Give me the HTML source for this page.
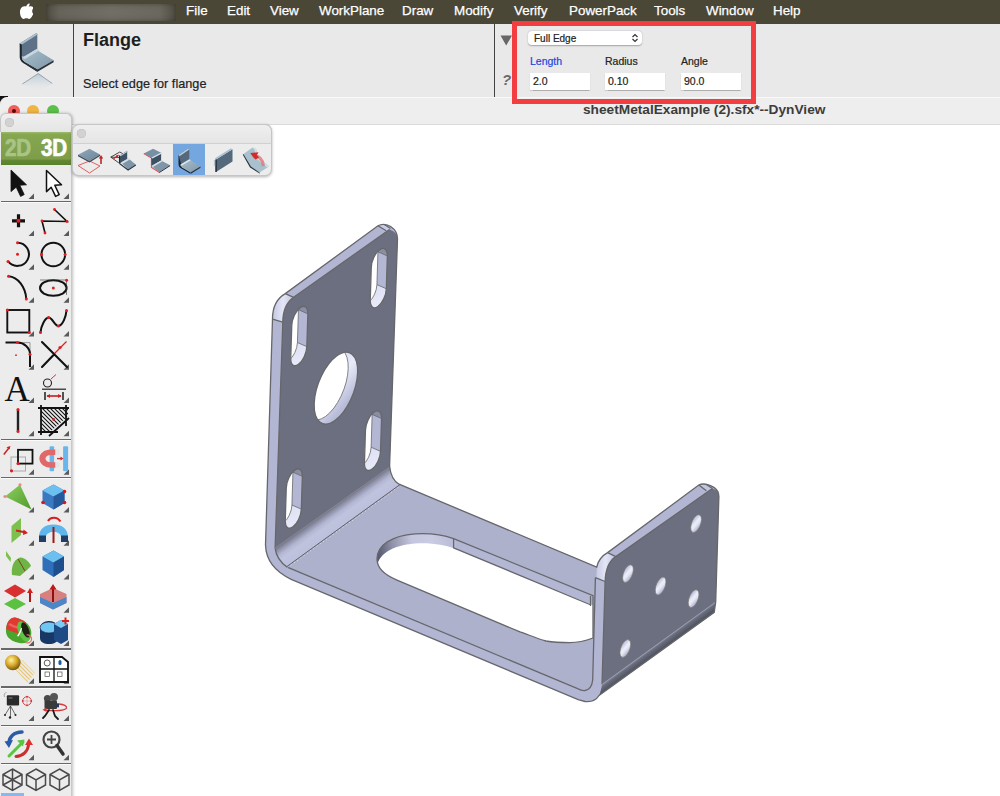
<!DOCTYPE html>
<html><head><meta charset="utf-8">
<style>
html,body{margin:0;padding:0;}
body{width:1000px;height:796px;overflow:hidden;position:relative;background:#fff;font-family:"Liberation Sans",sans-serif;}
.a{position:absolute;}
.menu{left:0;top:0;width:1000px;height:24px;background:#4a4736;}
.mi{position:absolute;top:3px;color:#fff;font-size:13.4px;line-height:16px;white-space:nowrap;-webkit-text-stroke:0.25px #fff;}
.hdr{left:0;top:24px;width:1000px;height:73px;background:#e9e9e9;}
.title{left:0;top:97px;width:1000px;height:27px;background:#ececec;border-bottom:1px solid #d8d8d8;}
.fld{position:absolute;background:#fff;height:17px;box-shadow:0 0.5px 1px rgba(0,0,0,0.25);font-size:10.5px;line-height:17px;color:#222;-webkit-text-stroke:0.2px #222;}
.lbl{position:absolute;font-size:10.5px;color:#222;-webkit-text-stroke:0.2px currentColor;}
</style></head><body>

<!-- menu bar -->
<div class="a menu">
  <svg class="a" style="left:19.5px;top:3.2px" width="13.8" height="16" viewBox="0 0 16 18" preserveAspectRatio="none"><path fill="#fff" d="M11.2 0.5c0.1 1.3-0.4 2.5-1.1 3.3-0.8 0.9-1.9 1.5-3 1.4-0.1-1.2 0.4-2.5 1.1-3.300.8-0.9 2-1.4 3-1.4zM14.9 13.2c-0.4 1-0.7 1.4-1.2 2.200-0.8 1.100-1.900 2.500-3.200 2.500-1.200 0-1.500-0.800-3.100-0.800-1.600 0-2 0.800-3.200 0.800-1.300 0-2.300-1.200-3.100-2.400C-0.300 12.300-0.500 8.300 1 6.100 2 4.500 3.600 3.600 5.100 3.600c1.500 0 2.500 0.800 3.800 0.800 1.200 0 2-0.800 3.700-0.800 1.300 0 2.700 0.700 3.700 2-3.300 1.800-2.700 6.400 0.600 7.600z"/></svg>
  <div class="a" style="left:45.5px;top:3.7px;width:130px;height:17.3px;background:linear-gradient(90deg,#4f4c42 0%,#66635a 10%,#716e65 50%,#6a675e 88%,#4f4c42 100%);box-shadow:inset 0 0 5px rgba(30,28,20,0.45);"></div>
  <span class="mi" style="left:186px">File</span>
  <span class="mi" style="left:227px">Edit</span>
  <span class="mi" style="left:270px">View</span>
  <span class="mi" style="left:319px">WorkPlane</span>
  <span class="mi" style="left:402px">Draw</span>
  <span class="mi" style="left:454px">Modify</span>
  <span class="mi" style="left:514px">Verify</span>
  <span class="mi" style="left:569px">PowerPack</span>
  <span class="mi" style="left:654px">Tools</span>
  <span class="mi" style="left:706px">Window</span>
  <span class="mi" style="left:773px">Help</span>
</div>

<!-- header panel -->
<div class="a hdr">
  <div class="a" style="left:73px;top:0;width:1.2px;height:73px;background:#444"></div>
  <div class="a" style="left:494px;top:0;width:1.2px;height:73px;background:#444"></div>
  <div class="a" style="left:83px;top:6px;font-size:18px;font-weight:bold;color:#1e1e1e">Flange</div>
  <div class="a" style="left:83px;top:52.5px;font-size:12.7px;color:#222;-webkit-text-stroke:0.2px #222">Select edge for flange</div>
  <svg class="a" style="left:500px;top:11px" width="13" height="11"><path d="M0.5 0.5H12L6.2 10.5Z" fill="#676767"/></svg>
  <div class="a" style="left:502px;top:47px;font-size:15px;font-weight:bold;font-style:italic;color:#6a6a6a">?</div>
  <!-- popup -->
  <div class="a" style="left:528px;top:6.5px;width:114px;height:14.5px;background:#fff;border-radius:4px;box-shadow:0 0.5px 1.5px rgba(0,0,0,0.3);"></div>
  <div class="a" style="left:534px;top:8px;font-size:10px;line-height:13px;color:#222;-webkit-text-stroke:0.2px #222">Full Edge</div>
  <svg class="a" style="left:631px;top:9px" width="8" height="10"><path d="M1.5 4L4 1.5L6.5 4M1.5 6L4 8.5L6.5 6" fill="none" stroke="#333" stroke-width="1.2"/></svg>
  <div class="lbl" style="left:530px;top:31px;color:#2245dd">Length</div>
  <div class="lbl" style="left:605px;top:31px">Radius</div>
  <div class="lbl" style="left:681px;top:31px">Angle</div>
  <div class="fld" style="left:530px;top:49px;width:60px"><span style="padding-left:3px">2.0</span></div>
  <div class="fld" style="left:605px;top:49px;width:60px"><span style="padding-left:3px">0.10</span></div>
  <div class="fld" style="left:681px;top:49px;width:60px"><span style="padding-left:3px">90.0</span></div>
</div>



<svg class="a" style="left:0;top:0" width="1000" height="796" viewBox="0 0 1000 796">
<defs>
<linearGradient id="bend1" gradientUnits="userSpaceOnUse" x1="332" y1="508" x2="344.5" y2="525.5">
<stop offset="0" stop-color="#74778b"/><stop offset="0.35" stop-color="#b3b6d1"/><stop offset="0.55" stop-color="#c0c3de"/><stop offset="1" stop-color="#bdc0dc"/></linearGradient>
<linearGradient id="bend2" gradientUnits="userSpaceOnUse" x1="658" y1="643.8" x2="664.5" y2="652.7">
<stop offset="0" stop-color="#8a8d9f"/><stop offset="0.15" stop-color="#6a6d7d"/><stop offset="0.6" stop-color="#50535f"/><stop offset="1" stop-color="#5c5f6c"/></linearGradient>
<linearGradient id="holeg" gradientUnits="objectBoundingBox" x1="0.35" y1="0" x2="0.65" y2="1">
<stop offset="0" stop-color="#b3b6d2"/><stop offset="0.42" stop-color="#eceefa"/><stop offset="0.62" stop-color="#e4e6f6"/><stop offset="1" stop-color="#a9acc9"/></linearGradient>
<linearGradient id="arcHi" gradientUnits="objectBoundingBox" x1="0" y1="0" x2="1" y2="0">
<stop offset="0" stop-color="#c4c7e2"/><stop offset="0.5" stop-color="#e4e6f7"/><stop offset="1" stop-color="#c0c3de"/></linearGradient>
<linearGradient id="wallBot" gradientUnits="objectBoundingBox" x1="0" y1="0" x2="0.3" y2="1">
<stop offset="0" stop-color="#d6d9f0"/><stop offset="0.5" stop-color="#e8eaf9"/><stop offset="1" stop-color="#b9bcd8"/></linearGradient>
<linearGradient id="wallTop" gradientUnits="objectBoundingBox" x1="0" y1="0" x2="0" y2="1">
<stop offset="0" stop-color="#6a6d7e"/><stop offset="1" stop-color="#9699b0"/></linearGradient>
<linearGradient id="slotarc" gradientUnits="userSpaceOnUse" x1="377" y1="552" x2="456" y2="540">
<stop offset="0" stop-color="#54576a"/><stop offset="0.2" stop-color="#8e91a8"/><stop offset="0.45" stop-color="#c3c6de"/><stop offset="0.7" stop-color="#c8cbe2"/><stop offset="1" stop-color="#b8bbd6"/></linearGradient>

<clipPath id="c_s0"><path transform="matrix(0.6699,-0.481,-0.031,1.0,0,0)" d="M 460.85 547.04 A 12.0 12.0 0 0 1 484.85 547.04 L 484.85 579.84 A 12.0 12.0 0 0 1 460.85 579.84 Z"/></clipPath>
<clipPath id="c_s1"><path transform="matrix(0.6699,-0.481,-0.031,1.0,0,0)" d="M 579.48 546.20 A 12.0 12.0 0 0 1 603.48 546.20 L 603.48 579.00 A 12.0 12.0 0 0 1 579.48 579.00 Z"/></clipPath>
<clipPath id="c_s2"><path transform="matrix(0.6699,-0.481,-0.031,1.0,0,0)" d="M 578.32 708.25 A 12.0 12.0 0 0 1 602.32 708.25 L 602.32 741.05 A 12.0 12.0 0 0 1 578.32 741.05 Z"/></clipPath>
<clipPath id="c_s3"><path transform="matrix(0.6699,-0.481,-0.031,1.0,0,0)" d="M 460.14 709.20 A 12.0 12.0 0 0 1 484.14 709.20 L 484.14 742.00 A 12.0 12.0 0 0 1 460.14 742.00 Z"/></clipPath>
<clipPath id="c_big"><path transform="matrix(0.6699,-0.481,-0.031,1.0,0,0)" d="M 498.80 643.71 A 32.4 32.4 0 0 1 563.60 643.71 A 32.4 32.4 0 0 1 498.80 643.71 Z"/></clipPath>
<clipPath id="c_slot"><path d="M 377 559 C 377 545 392 535.5 415 533.8 C 432 532.8 445 535.5 453.6 538.6 L 593 595.6 L 593 638 C 585 641 575 642.6 569.8 642.6 C 560 642.6 552 642 546 641 C 535 638 527 634 520 631.9 L 396.4 579.8 C 385 575 377 568 377 559 Z"/></clipPath>
</defs>
<path d="M 272.5 319 C 272.5 307 277.5 298 285.3 293.6 L 378 225.8 C 381.5 223.8 386.5 224 391 226.8 C 395 229.5 397.5 233.5 397.5 239 L 389.6 466 C 390.5 475 393.5 481 399 484.2 L 596.7 567 C 598 561 601.5 556 607.6 552.6 L 698.8 485.1 C 702 483.4 708 484 713.9 487.4 C 717.5 489.8 718.9 492.5 718.9 496.4 L 715.7 602 L 714.2 612.4 L 599 695.5 C 596 700.5 590 702 585 701.5 L 578.2 699.6 L 291.2 579.3 C 278 573 266 562 265.5 545 Z" fill="#b3b6d2"/>
<path d="M 285.3 293.6 C 277.5 298 272.5 307 272.5 319.2 L 282.8 322.2 C 282.8 311 287 302 293.6 297.3 Z" fill="url(#arcHi)"/>
<path d="M 607.6 552.6 C 601.5 556 596 565 595.4 577.7 L 605.1 581.5 C 605.5 570 609 561 615.8 556.6 Z" fill="url(#arcHi)"/>
<path d="M 377.9 225.9 C 382 223.5 387 223.5 391 226 L 389.5 229.5 L 386.2 230.8 Z" fill="#c9cce6"/>
<path d="M 698.8 485.1 C 702 483.4 708 484 712.7 488.8 L 706.4 490.7 Z" fill="#c2c5e0"/>
<path d="M 286.7 566.7 L 400.2 484.4 L 596.7 567 L 592.7 680 C 592 686 589 690 585 690.5 C 582 690.8 580 690 578.2 688.9 Z" fill="#adb1cc"/>
<path d="M 275.1 548.1 L 389.6 467 C 390.5 475 393.5 481 400.2 484.4 L 286.7 566.7 C 280 562 276 556 275.1 548.1 Z" fill="url(#bend1)"/>
<path d="M 282.8 322.2 C 282.8 311 287 302 293.6 297.3 L 389.5 229.5 C 394 231 397.5 234 397.5 239 L 389.6 467 L 275.1 548.1 Z" fill="#6c6f80"/>
<path d="M 605.1 581.5 C 605.5 570 609 561 615.8 556.6 L 712 488.8 C 716 489.5 718.9 492 718.9 496.4 L 715.7 602 L 602 684.4 Z" fill="#6c6f80"/>
<path d="M 602 684.4 L 715.7 602 L 714.2 612.4 L 599 695.5 C 600.5 692 601.5 688 602 684.4 Z" fill="url(#bend2)"/>
<path d="M 377 559 C 377 545 392 535.5 415 533.8 C 432 532.8 445 535.5 453.6 538.6 L 593 595.6 L 593 638 C 585 641 575 642.6 569.8 642.6 C 560 642.6 552 642 546 641 C 535 638 527 634 520 631.9 L 396.4 579.8 C 385 575 377 568 377 559 Z" fill="#b4b7d3"/>
<g clip-path="url(#c_slot)"><path d="M 370 530 L 456 530 L 456 556 L 370 580 Z" fill="url(#slotarc)"/><path transform="translate(0,9.6)" d="M 377 559 C 377 545 392 535.5 415 533.8 C 432 532.8 445 535.5 453.6 538.6 L 593 595.6 L 593 638 C 585 641 575 642.6 569.8 642.6 C 560 642.6 552 642 546 641 C 535 638 527 634 520 631.9 L 396.4 579.8 C 385 575 377 568 377 559 Z" fill="#fff"/></g>
<path transform="matrix(0.6699,-0.481,-0.031,1.0,0,0)" d="M 460.85 547.04 A 12.0 12.0 0 0 1 484.85 547.04 L 484.85 579.84 A 12.0 12.0 0 0 1 460.85 579.84 Z" fill="#b4b7d3"/>
<g clip-path="url(#c_s0)"><path d="M 279.33 334.63 L 334.32 358.62 L 334.32 398.62 L 279.33 374.63 Z" fill="url(#wallBot)"/><path d="M 280.34 301.83 L 335.34 325.82 L 335.34 285.82 L 280.34 261.83 Z" fill="url(#wallTop)"/><path transform="translate(-9.4,-4.1) matrix(0.6699,-0.481,-0.031,1.0,0,0)" d="M 460.85 547.04 A 12.0 12.0 0 0 1 484.85 547.04 L 484.85 579.84 A 12.0 12.0 0 0 1 460.85 579.84 Z" fill="#fff"/><path d="M 306.83 346.63 L 297.43 342.53 M 307.84 313.83 L 298.44 309.73" stroke="#66676b" stroke-width="0.8"/><path transform="translate(-9.4,-4.1) matrix(0.6699,-0.481,-0.031,1.0,0,0)" d="M 460.85 547.04 A 12.0 12.0 0 0 1 484.85 547.04 L 484.85 579.84 A 12.0 12.0 0 0 1 460.85 579.84 Z" fill="none" stroke="#66676b" stroke-width="0.8" vector-effect="non-scaling-stroke"/></g>
<path transform="matrix(0.6699,-0.481,-0.031,1.0,0,0)" d="M 460.85 547.04 A 12.0 12.0 0 0 1 484.85 547.04 L 484.85 579.84 A 12.0 12.0 0 0 1 460.85 579.84 Z" fill="none" stroke="#66676b" stroke-width="1.3" vector-effect="non-scaling-stroke"/>
<path transform="matrix(0.6699,-0.481,-0.031,1.0,0,0)" d="M 579.48 546.20 A 12.0 12.0 0 0 1 603.48 546.20 L 603.48 579.00 A 12.0 12.0 0 0 1 579.48 579.00 Z" fill="#b4b7d3"/>
<g clip-path="url(#c_s1)"><path d="M 358.83 276.73 L 413.82 300.72 L 413.82 340.72 L 358.83 316.73 Z" fill="url(#wallBot)"/><path d="M 359.84 243.93 L 414.84 267.92 L 414.84 227.92 L 359.84 203.93 Z" fill="url(#wallTop)"/><path transform="translate(-9.4,-4.1) matrix(0.6699,-0.481,-0.031,1.0,0,0)" d="M 579.48 546.20 A 12.0 12.0 0 0 1 603.48 546.20 L 603.48 579.00 A 12.0 12.0 0 0 1 579.48 579.00 Z" fill="#fff"/><path d="M 386.32 288.73 L 376.92 284.63 M 387.34 255.93 L 377.94 251.83" stroke="#66676b" stroke-width="0.8"/><path transform="translate(-9.4,-4.1) matrix(0.6699,-0.481,-0.031,1.0,0,0)" d="M 579.48 546.20 A 12.0 12.0 0 0 1 603.48 546.20 L 603.48 579.00 A 12.0 12.0 0 0 1 579.48 579.00 Z" fill="none" stroke="#66676b" stroke-width="0.8" vector-effect="non-scaling-stroke"/></g>
<path transform="matrix(0.6699,-0.481,-0.031,1.0,0,0)" d="M 579.48 546.20 A 12.0 12.0 0 0 1 603.48 546.20 L 603.48 579.00 A 12.0 12.0 0 0 1 579.48 579.00 Z" fill="none" stroke="#66676b" stroke-width="1.3" vector-effect="non-scaling-stroke"/>
<path transform="matrix(0.6699,-0.481,-0.031,1.0,0,0)" d="M 578.32 708.25 A 12.0 12.0 0 0 1 602.32 708.25 L 602.32 741.05 A 12.0 12.0 0 0 1 578.32 741.05 Z" fill="#b4b7d3"/>
<g clip-path="url(#c_s2)"><path d="M 353.03 439.33 L 408.02 463.32 L 408.02 503.32 L 353.03 479.33 Z" fill="url(#wallBot)"/><path d="M 354.04 406.53 L 409.04 430.52 L 409.04 390.52 L 354.04 366.53 Z" fill="url(#wallTop)"/><path transform="translate(-9.4,-4.1) matrix(0.6699,-0.481,-0.031,1.0,0,0)" d="M 578.32 708.25 A 12.0 12.0 0 0 1 602.32 708.25 L 602.32 741.05 A 12.0 12.0 0 0 1 578.32 741.05 Z" fill="#fff"/><path d="M 380.52 451.33 L 371.12 447.23 M 381.54 418.53 L 372.14 414.43" stroke="#66676b" stroke-width="0.8"/><path transform="translate(-9.4,-4.1) matrix(0.6699,-0.481,-0.031,1.0,0,0)" d="M 578.32 708.25 A 12.0 12.0 0 0 1 602.32 708.25 L 602.32 741.05 A 12.0 12.0 0 0 1 578.32 741.05 Z" fill="none" stroke="#66676b" stroke-width="0.8" vector-effect="non-scaling-stroke"/></g>
<path transform="matrix(0.6699,-0.481,-0.031,1.0,0,0)" d="M 578.32 708.25 A 12.0 12.0 0 0 1 602.32 708.25 L 602.32 741.05 A 12.0 12.0 0 0 1 578.32 741.05 Z" fill="none" stroke="#66676b" stroke-width="1.3" vector-effect="non-scaling-stroke"/>
<path transform="matrix(0.6699,-0.481,-0.031,1.0,0,0)" d="M 460.14 709.20 A 12.0 12.0 0 0 1 484.14 709.20 L 484.14 742.00 A 12.0 12.0 0 0 1 460.14 742.00 Z" fill="#b4b7d3"/>
<g clip-path="url(#c_s3)"><path d="M 273.83 497.13 L 328.82 521.12 L 328.82 561.12 L 273.83 537.13 Z" fill="url(#wallBot)"/><path d="M 274.84 464.33 L 329.84 488.32 L 329.84 448.32 L 274.84 424.33 Z" fill="url(#wallTop)"/><path transform="translate(-9.4,-4.1) matrix(0.6699,-0.481,-0.031,1.0,0,0)" d="M 460.14 709.20 A 12.0 12.0 0 0 1 484.14 709.20 L 484.14 742.00 A 12.0 12.0 0 0 1 460.14 742.00 Z" fill="#fff"/><path d="M 301.33 509.13 L 291.93 505.03 M 302.34 476.33 L 292.94 472.23" stroke="#66676b" stroke-width="0.8"/><path transform="translate(-9.4,-4.1) matrix(0.6699,-0.481,-0.031,1.0,0,0)" d="M 460.14 709.20 A 12.0 12.0 0 0 1 484.14 709.20 L 484.14 742.00 A 12.0 12.0 0 0 1 460.14 742.00 Z" fill="none" stroke="#66676b" stroke-width="0.8" vector-effect="non-scaling-stroke"/></g>
<path transform="matrix(0.6699,-0.481,-0.031,1.0,0,0)" d="M 460.14 709.20 A 12.0 12.0 0 0 1 484.14 709.20 L 484.14 742.00 A 12.0 12.0 0 0 1 460.14 742.00 Z" fill="none" stroke="#66676b" stroke-width="1.3" vector-effect="non-scaling-stroke"/>
<path transform="matrix(0.6699,-0.481,-0.031,1.0,0,0)" d="M 498.80 643.71 A 32.4 32.4 0 0 1 563.60 643.71 A 32.4 32.4 0 0 1 498.80 643.71 Z" fill="#b4b7d3"/>
<g clip-path="url(#c_big)"><path transform="matrix(0.6699,-0.481,-0.031,1.0,0,0)" d="M 498.80 643.71 A 32.4 32.4 0 0 1 563.60 643.71 A 32.4 32.4 0 0 1 498.80 643.71 Z" fill="url(#wallBot)"/><path transform="translate(-9.4,-4.1) matrix(0.6699,-0.481,-0.031,1.0,0,0)" d="M 498.80 643.71 A 32.4 32.4 0 0 1 563.60 643.71 A 32.4 32.4 0 0 1 498.80 643.71 Z" fill="#fff" stroke="#66676b" stroke-width="0.8" vector-effect="non-scaling-stroke"/></g>
<path transform="matrix(0.6699,-0.481,-0.031,1.0,0,0)" d="M 498.80 643.71 A 32.4 32.4 0 0 1 563.60 643.71 A 32.4 32.4 0 0 1 498.80 643.71 Z" fill="none" stroke="#66676b" stroke-width="1.3" vector-effect="non-scaling-stroke"/>
<path transform="matrix(0.6699,-0.481,-0.031,1.0,0,0)" d="M 1079.53 1046.70 A 8.0 8.0 0 0 1 1095.53 1046.70 A 8.0 8.0 0 0 1 1079.53 1046.70 Z" fill="url(#holeg)" stroke="#7d7a70" stroke-width="0.7" vector-effect="non-scaling-stroke"/>
<path transform="matrix(0.6699,-0.481,-0.031,1.0,0,0)" d="M 977.93 1047.83 A 8.0 8.0 0 0 1 993.93 1047.83 A 8.0 8.0 0 0 1 977.93 1047.83 Z" fill="url(#holeg)" stroke="#7d7a70" stroke-width="0.7" vector-effect="non-scaling-stroke"/>
<path transform="matrix(0.6699,-0.481,-0.031,1.0,0,0)" d="M 1028.28 1084.45 A 8.0 8.0 0 0 1 1044.28 1084.45 A 8.0 8.0 0 0 1 1028.28 1084.45 Z" fill="url(#holeg)" stroke="#7d7a70" stroke-width="0.7" vector-effect="non-scaling-stroke"/>
<path transform="matrix(0.6699,-0.481,-0.031,1.0,0,0)" d="M 1079.26 1121.57 A 8.0 8.0 0 0 1 1095.26 1121.57 A 8.0 8.0 0 0 1 1079.26 1121.57 Z" fill="url(#holeg)" stroke="#7d7a70" stroke-width="0.7" vector-effect="non-scaling-stroke"/>
<path transform="matrix(0.6699,-0.481,-0.031,1.0,0,0)" d="M 977.35 1122.45 A 8.0 8.0 0 0 1 993.35 1122.45 A 8.0 8.0 0 0 1 977.35 1122.45 Z" fill="url(#holeg)" stroke="#7d7a70" stroke-width="0.7" vector-effect="non-scaling-stroke"/>
<path d="M 282.8 322.2 C 282.8 311 287 302 293.6 297.3 L 389.5 229.5" fill="none" stroke="#66676b" stroke-width="1.3"/>
<path d="M 282.8 322.2 L 275.1 548.1" fill="none" stroke="#66676b" stroke-width="1.3"/>
<path d="M 287.2 567.2 L 578.2 688.9" fill="none" stroke="#66676b" stroke-width="1.3"/>
<path d="M 275.1 548.1 C 276 556 280 562 287.2 567.2" fill="none" stroke="#66676b" stroke-width="1.3"/>
<path d="M 605.1 581.5 C 605.5 570 609 561 615.8 556.6 L 712 488.8" fill="none" stroke="#66676b" stroke-width="1.3"/>
<path d="M 605.1 581.5 L 602 684.4" fill="none" stroke="#66676b" stroke-width="1.3"/>
<path d="M 595.4 577.7 L 592.7 680 C 592 686 589 690 585 690.5 C 582 690.8 580 690 578.2 688.9" fill="none" stroke="#66676b" stroke-width="1.3"/>
<path d="M 453.6 547.8 L 591 605" fill="none" stroke="#66676b" stroke-width="1.3"/>
<path d="M 590.5 596 L 590.5 606" fill="none" stroke="#66676b" stroke-width="1.3"/>
<path d="M 453.6 538.6 L 453.6 548.2" fill="none" stroke="#66676b" stroke-width="1.3"/>
<path d="M 285.3 293.6 L 293.6 297.3 M 272.5 319.2 L 282.8 322.2" fill="none" stroke="#66676b" stroke-width="1.3"/>
<path d="M 607.6 552.6 L 615.8 556.6 M 595.4 577.7 L 605.1 581.5" fill="none" stroke="#66676b" stroke-width="1.3"/>
<path d="M 378 225.8 L 386.2 230.8 M 384 224.2 L 390.5 228.5 M 698.8 485.1 L 706.4 490.7 M 706.4 484.5 L 712.7 488.8" fill="none" stroke="#66676b" stroke-width="1.3"/>
<path d="M 377 559 C 377 545 392 535.5 415 533.8 C 432 532.8 445 535.5 453.6 538.6 L 593 595.6 L 593 638 C 585 641 575 642.6 569.8 642.6 C 560 642.6 552 642 546 641 C 535 638 527 634 520 631.9 L 396.4 579.8 C 385 575 377 568 377 559 Z" fill="none" stroke="#66676b" stroke-width="1.3"/>
<path d="M 275.1 548.1 L 389.6 467" fill="none" stroke="#85858a" stroke-width="0.9"/>
<path d="M 287.5 567.6 L 401 485.2" fill="none" stroke="#ffffff" stroke-width="0.9" stroke-dasharray="1 3" opacity="0.8"/>
<path d="M 286.7 566.7 L 400.2 484.4" fill="none" stroke="#606066" stroke-width="1"/>
<path d="M 602 684.4 L 715.7 602" fill="none" stroke="#9a9db0" stroke-width="0.8"/>
<path d="M 272.5 319 C 272.5 307 277.5 298 285.3 293.6 L 378 225.8 C 381.5 223.8 386.5 224 391 226.8 C 395 229.5 397.5 233.5 397.5 239 L 389.6 466 C 390.5 475 393.5 481 399 484.2 L 596.7 567 C 598 561 601.5 556 607.6 552.6 L 698.8 485.1 C 702 483.4 708 484 713.9 487.4 C 717.5 489.8 718.9 492.5 718.9 496.4 L 715.7 602 L 714.2 612.4 L 599 695.5 C 596 700.5 590 702 585 701.5 L 578.2 699.6 L 291.2 579.3 C 278 573 266 562 265.5 545 Z" fill="none" stroke="#66676b" stroke-width="1.3"/>
</svg>
<!-- window corner -->
<div class="a" style="left:0;top:96px;width:8px;height:10px;background:#111;"></div>
<div class="a" style="left:0;top:97px;width:1000px;height:28px;background:#eeeeee;border-top-left-radius:7px;border-top:1px solid #f8f8f8;box-sizing:border-box;"></div>
<div class="a" style="left:0;top:124px;width:1000px;height:1px;background:#dadada;"></div>
<div class="a" style="left:583px;top:102px;font-size:13.7px;font-weight:bold;color:#3c3c3c;white-space:nowrap">sheetMetalExample (2).sfx*--DynView</div>
<!-- traffic lights -->
<div class="a" style="left:8px;top:104.5px;width:12px;height:12px;border-radius:50%;background:#ee5f5b;"><div class="a" style="left:4px;top:4px;width:4px;height:4px;border-radius:50%;background:#5a0b08"></div></div>
<div class="a" style="left:27px;top:104.5px;width:12px;height:12px;border-radius:50%;background:#f0b443;"></div>
<div class="a" style="left:47px;top:104.5px;width:12px;height:12px;border-radius:50%;background:#5bbf4b;"></div>

<!-- palette 1 -->
<div class="a" style="left:0;top:113px;width:72px;height:700px;background:#ececec;border-top-right-radius:6px;border-top-left-radius:6px;box-shadow:1px 0 3px rgba(0,0,0,0.25);border-right:1px solid #c9c9c9;box-sizing:border-box;"></div>
<div class="a" style="left:0;top:113px;width:72px;height:18.7px;background:linear-gradient(#efefef,#e5e5e5);border-top-right-radius:6px;border-top-left-radius:6px;border:0.6px solid #c6c6c6;border-bottom:none;box-sizing:border-box;"></div>
<div class="a" style="left:4.5px;top:117.5px;width:9px;height:9px;border-radius:50%;background:#d2d2d2;box-shadow:inset 0 0 0 0.5px #bdbdbd"></div>
<div class="a" style="left:1px;top:131.7px;width:70px;height:33.5px;background:linear-gradient(#9dbb6c 0,#86a650 2.5px,#7d9d48 27px,#628833 28.5px,#5a7f2c 33.5px);"></div>
<div class="a" style="left:5px;top:134px;font-size:24px;font-weight:bold;color:#a9c488;transform:scaleX(0.86);transform-origin:0 0;letter-spacing:-0.3px;-webkit-text-stroke:0.7px #a9c488">2D</div>
<div class="a" style="left:41px;top:134px;font-size:24px;font-weight:bold;color:#fff;transform:scaleX(0.86);transform-origin:0 0;letter-spacing:-0.3px;-webkit-text-stroke:0.7px #fff">3D</div>
<div class="a" style="left:1px;top:200.7px;width:69.5px;height:1.6px;background:#686868;border-bottom:1px solid #fafafa"></div>
<div class="a" style="left:1px;top:438.7px;width:69.5px;height:1.6px;background:#686868;border-bottom:1px solid #fafafa"></div>
<div class="a" style="left:1px;top:476.7px;width:69.5px;height:1.6px;background:#686868;border-bottom:1px solid #fafafa"></div>
<div class="a" style="left:1px;top:648.2px;width:69.5px;height:1.6px;background:#686868;border-bottom:1px solid #fafafa"></div>
<div class="a" style="left:1px;top:686.2px;width:69.5px;height:1.6px;background:#686868;border-bottom:1px solid #fafafa"></div>
<div class="a" style="left:1px;top:724.7px;width:69.5px;height:1.6px;background:#686868;border-bottom:1px solid #fafafa"></div>
<div class="a" style="left:1px;top:762.7px;width:69.5px;height:1.6px;background:#686868;border-bottom:1px solid #fafafa"></div>


<!-- palette 2 -->
<div class="a" style="left:72px;top:124px;width:200px;height:52px;background:#ececec;border-radius:7px;box-shadow:0 1px 3px rgba(0,0,0,0.3);border:0.6px solid #c6c6c6;box-sizing:border-box"></div>
<div class="a" style="left:72px;top:124px;width:200px;height:19.5px;background:linear-gradient(#efefef,#e5e5e5);border-radius:7px 7px 0 0;border:0.6px solid #c6c6c6;border-bottom:1px solid #d0d0d0;box-sizing:border-box"></div>
<div class="a" style="left:77.2px;top:129px;width:9px;height:9px;border-radius:50%;background:#d2d2d2;box-shadow:inset 0 0 0 0.5px #bdbdbd"></div>
<div class="a" style="left:173px;top:143.5px;width:32px;height:31px;background:#74a6e0;"></div>
<svg class="a" style="left:0;top:0" width="80" height="796" viewBox="0 0 80 796">
<defs>
<linearGradient id="gBlue" x1="0" y1="0" x2="0" y2="1"><stop offset="0" stop-color="#6ec3f2"/><stop offset="1" stop-color="#2f6fb8"/></linearGradient>
<linearGradient id="gGreen" x1="0" y1="0" x2="1" y2="1"><stop offset="0" stop-color="#8fd060"/><stop offset="1" stop-color="#4f9a2c"/></linearGradient>
<radialGradient id="gGold" cx="0.4" cy="0.35" r="0.7"><stop offset="0" stop-color="#fff3a0"/><stop offset="0.5" stop-color="#d6a828"/><stop offset="1" stop-color="#6b4a10"/></radialGradient>
</defs>
<!-- indicator triangles -->
<g fill="#5a5a5a">
<path d="M34 193.5L34 199L28.5 199Z"/><path d="M69 193.5L69 199L63.5 199Z"/><path d="M34 230.5L34 236L28.5 236Z"/><path d="M69 230.5L69 236L63.5 236Z"/><path d="M34 264.2L34 269.7L28.5 269.7Z"/><path d="M69 264.2L69 269.7L63.5 269.7Z"/><path d="M34 297.3L34 302.8L28.5 302.8Z"/><path d="M69 297.3L69 302.8L63.5 302.8Z"/><path d="M34 331.1L34 336.6L28.5 336.6Z"/><path d="M69 331.1L69 336.6L63.5 336.6Z"/><path d="M34 364.3L34 369.8L28.5 369.8Z"/><path d="M69 364.3L69 369.8L63.5 369.8Z"/><path d="M34 397.5L34 403L28.5 403Z"/><path d="M69 397.5L69 403L63.5 403Z"/><path d="M34 430.8L34 436.3L28.5 436.3Z"/><path d="M69 430.8L69 436.3L63.5 436.3Z"/><path d="M34 469.2L34 474.7L28.5 474.7Z"/><path d="M69 469.2L69 474.7L63.5 474.7Z"/><path d="M34 507.1L34 512.6L28.5 512.6Z"/><path d="M69 507.1L69 512.6L63.5 512.6Z"/><path d="M34 540.2L34 545.7L28.5 545.7Z"/><path d="M69 540.2L69 545.7L63.5 545.7Z"/><path d="M34 573.9L34 579.4L28.5 579.4Z"/><path d="M69 573.9L69 579.4L63.5 579.4Z"/><path d="M34 607.2L34 612.7L28.5 612.7Z"/><path d="M69 607.2L69 612.7L63.5 612.7Z"/><path d="M34 640.4L34 645.9L28.5 645.9Z"/><path d="M69 640.4L69 645.9L63.5 645.9Z"/><path d="M34 678.2L34 683.7L28.5 683.7Z"/><path d="M69 678.2L69 683.7L63.5 683.7Z"/><path d="M34 715.5L34 721L28.5 721Z"/><path d="M69 715.5L69 721L63.5 721Z"/><path d="M34 754.7L34 760.2L28.5 760.2Z"/><path d="M69 754.7L69 760.2L63.5 760.2Z"/></g>
<!-- row1 arrows -->
<path d="M11 170L26.5 184.8L19.8 185.2L24.2 194.6L20.6 196.4L16.2 187.2L11 191.6Z" fill="#111" stroke="#111" stroke-width="0.8" stroke-linejoin="round"/>
<path d="M46.5 170.5L61.5 184.8L54.8 185.2L59.2 194.6L55.6 196.4L51.2 187.2L46.5 191.6Z" fill="#fff" stroke="#111" stroke-width="1.5" stroke-linejoin="round"/>
<!-- row2 -->
<path d="M12 220.8H25M18.5 214.3V227.3" stroke="#111" stroke-width="3.2"/>
<circle cx="18.5" cy="220.8" r="2" fill="#e02020"/>
<path d="M54.5 209.5L67 221.5L42 221L45 233" fill="none" stroke="#111" stroke-width="1.6"/>
<g fill="#e02020"><circle cx="54.5" cy="209.5" r="1.4"/><circle cx="67" cy="221.5" r="1.4"/><circle cx="42" cy="221" r="1.4"/><circle cx="45" cy="233" r="1.4"/></g>
<!-- row3 -->
<path d="M17.5 242.7A11.6 11.6 0 1 1 8 261.2" fill="none" stroke="#111" stroke-width="2"/>
<g fill="#e02020"><circle cx="17.5" cy="242.7" r="1.5"/><circle cx="17.5" cy="254.2" r="1.5"/><circle cx="8" cy="261.5" r="1.5"/></g>
<circle cx="53.3" cy="254.5" r="11.8" fill="none" stroke="#111" stroke-width="2"/>
<g fill="#e02020"><circle cx="41.5" cy="254.5" r="1.5"/><circle cx="65.1" cy="254.5" r="1.5"/></g>
<!-- row4 -->
<path d="M8.5 276.3C18 277 25.5 287 26.3 299" fill="none" stroke="#111" stroke-width="2"/>
<g fill="#e02020"><circle cx="8.5" cy="276.3" r="1.5"/><circle cx="26.3" cy="299" r="1.5"/></g>
<ellipse cx="53.3" cy="288" rx="13.3" ry="7.8" fill="none" stroke="#111" stroke-width="2"/>
<path d="M40 280H66.5V295" fill="none" stroke="#333" stroke-width="0.6"/>
<g fill="#e02020"><circle cx="53.3" cy="288" r="1.5"/><circle cx="66.6" cy="280.2" r="1.5"/></g>
<!-- row5 -->
<rect x="7.3" y="310" width="22" height="22.5" fill="none" stroke="#111" stroke-width="1.9"/>
<g fill="#e02020"><circle cx="7.3" cy="310" r="1.5"/><circle cx="29.3" cy="332.5" r="1.5"/></g>
<path d="M40.5 332.4C41 326 45 318 48.6 317.6C52 317.3 55 326 58.3 326C63 325.5 66 316 66.5 310.5" fill="none" stroke="#111" stroke-width="2"/>
<g fill="#e02020"><circle cx="40.5" cy="332.4" r="1.5"/><circle cx="48.6" cy="317.6" r="1.5"/><circle cx="58.3" cy="326" r="1.5"/><circle cx="66.5" cy="310.5" r="1.5"/></g>
<!-- row6 -->
<path d="M17.5 342.6H30V355" fill="none" stroke="#777" stroke-width="0.7"/>
<path d="M5.5 342.6H17.5C24 342.6 30 348 30 354.2V367" fill="none" stroke="#111" stroke-width="2"/>
<g fill="#e02020"><circle cx="17.5" cy="342.6" r="1.5"/><circle cx="30" cy="354.2" r="1.5"/><circle cx="16" cy="355.2" r="0.9"/></g>
<path d="M42 342L67 367M42 367L54.5 354" stroke="#111" stroke-width="2.1" stroke-linecap="round"/>
<path d="M54.5 353.5L66.5 341.5" stroke="#e02020" stroke-width="1.3"/>
<circle cx="60" cy="347.5" r="1.6" fill="#e02020"/>
<!-- row7 -->
<text x="4.5" y="401" font-family="Liberation Serif" font-size="35" fill="#111">A</text>
<circle cx="47.5" cy="383" r="4" fill="none" stroke="#222" stroke-width="1.1"/>
<path d="M51 379L56 374.5" stroke="#e03030" stroke-width="1"/>
<path d="M42 389.2H66" stroke="#222" stroke-width="1.2"/>
<path d="M45 392V400M63 392V400" stroke="#111" stroke-width="1.4"/>
<path d="M47 396H61" stroke="#c02020" stroke-width="1.6"/>
<path d="M46.5 396L50 394V398ZM61.5 396L58 394V398Z" fill="#d02020"/>
<!-- row8 -->
<path d="M18 409.5V431.5" stroke="#222" stroke-width="2.4"/>
<g fill="#e02020"><circle cx="18" cy="409.5" r="1.5"/><circle cx="18" cy="431.5" r="1.5"/></g>
<defs><clipPath id="hcl"><path d="M41 408H68V416L50 432H41Z"/></clipPath></defs>
<g clip-path="url(#hcl)" stroke="#111" stroke-width="1.1">
<path d="M6 400L46 440M10 400L50 440M14 400L54 440M18 400L58 440M22 400L62 440M26 400L66 440M30 400L70 440M34 400L74 440M38 400L78 440M42 400L82 440M46 400L86 440M50 400L90 440M54 400L94 440M58 400L98 440M62 400L102 440M66 400L106 440"/>
</g>
<path d="M38 408H69M41 405V435M38 432H58M66 405V426M49 436L69 418" fill="none" stroke="#111" stroke-width="1.8"/>
<circle cx="53.6" cy="419.5" r="1.4" fill="#e02020"/>
<!-- row9 -->
<path d="M3.8 454.5L9.5 447.3" stroke="#d02020" stroke-width="1.5"/><path d="M10.5 446L6.5 447.2L9.3 449.6Z" fill="#d02020"/>
<rect x="11" y="457" width="14.5" height="14" fill="none" stroke="#aaa" stroke-width="1"/>
<rect x="18" y="449.8" width="14.5" height="13.8" fill="none" stroke="#111" stroke-width="1.8"/>
<g fill="#e02020"><circle cx="18" cy="463.5" r="1.6"/><circle cx="11.5" cy="470.8" r="1.6"/></g>
<rect x="49.6" y="446.3" width="4.5" height="25" rx="1" fill="#6ab6ea"/>
<rect x="63.1" y="446.3" width="5" height="25" rx="1" fill="#6ab6ea"/>
<path d="M55.5 449.5H51C44 449.5 39.4 453.5 39.4 458.6C39.4 463.7 44 467.7 51 467.7H55.5V462.3H51C47.5 462.3 45.5 460.8 45.5 458.6C45.5 456.4 47.5 454.9 51 454.9H55.5Z" fill="#e06868"/>
<path d="M55.5 449.5H59.5V454.9H55.5ZM55.5 462.3H59.5V467.7H55.5Z" fill="#e4e4e4"/>
<path d="M57 458.6H62" stroke="#d03030" stroke-width="1.4"/><path d="M63.5 458.6L60.5 456.6V460.6Z" fill="#d03030"/>
<!-- row10 -->
<path d="M20 484.8L5 496.5L31.5 509.5Z" fill="url(#gGreen)"/>
<g fill="#e88"><circle cx="20" cy="484.8" r="1.6"/><circle cx="5" cy="496.5" r="1.6"/></g>
<path d="M53.5 484.5L64.5 490.5V503L53.5 509.5L42.5 503V490.5Z" fill="#3a78c0"/>
<path d="M53.5 484.5L64.5 490.5L53.5 496.5L42.5 490.5Z" fill="#6cc0f0"/>
<path d="M53.5 496.5L64.5 490.5V503L53.5 509.5Z" fill="#245a9c"/>
<g fill="#d81818"><circle cx="64.5" cy="491.5" r="1.8"/><circle cx="43" cy="502.5" r="1.8"/><circle cx="64.5" cy="502.5" r="1.8"/></g>
<!-- row11 -->
<path d="M11.5 526L21 518V535L11.5 543Z" fill="#7ec050"/>
<path d="M16 530.5L26 532.5" stroke="#d02020" stroke-width="1.8"/><path d="M28 533L23.5 529.5L23 535Z" fill="#d02020"/>
<path d="M39 537C39 529 45 524.5 53.5 524.5C62 524.5 68 529 68 537V542H61V537C61 534 58 532 53.5 532C49 532 46 534 46 537V542H39Z" fill="#5fb6ea"/>
<path d="M39 535.5H46V542H39ZM61 535.5H68V542H61Z" fill="#213e66"/>
<path d="M53.5 527V543" stroke="#9b1a1a" stroke-width="2"/>
<path d="M48 521C50 517 57 516 60.5 521.5" fill="none" stroke="#d62020" stroke-width="2"/>
<!-- row12 -->
<path d="M6 551L11 558L10.5 562L6 556Z" fill="#7ec050"/>
<path d="M12 575C11 568 13 560 20 557.5C25 557 30 563 31 566L27 570L20 576Z" fill="#6fb545"/>
<path d="M18 559L25 571" stroke="#7a4020" stroke-width="1"/>
<path d="M53.5 550.5L64 556.5V570L53.5 577L42.5 570V556.5Z" fill="#2f6eb8"/>
<path d="M53.5 550.5L64 556.5L53.5 562.5L42.5 556.5Z" fill="#6cc0f0"/>
<path d="M53.5 562.5L64 556.5V570L53.5 577Z" fill="#1f4e8c"/>
<!-- row13 -->
<path d="M15 584.5L26 591L15 597.5L4 591Z" fill="#d83030"/>
<path d="M15 598L26 604L15 610L4 604Z" fill="#5cc040"/>
<path d="M30 591V602" stroke="#b01818" stroke-width="2"/><path d="M30 588L27 593H33Z" fill="#d02020"/>
<path d="M53 588L66.5 594V603L53 609.5L40 603V594Z" fill="#d88080"/>
<path d="M40 597L53 603L66.5 597V603L53 609.5L40 603Z" fill="#4a86c8"/>
<path d="M53 589V602" stroke="#901010" stroke-width="2"/><path d="M53 584L49.5 589.5H56.5Z" fill="#c01818"/>
<!-- row14 -->
<path d="M15 617.5C19 618.5 23 620 26 622.5C31 626 32.5 633 30.5 638C28.5 642.5 24 644 19.5 643C14 642 9 639.5 7 635.5C5 631 6 624 9 620.5C10.5 618.5 12.5 617.5 15 617.5Z" fill="#4aa52c"/>
<path d="M15 617.5C19 618.5 23 620 26 622.5L19 633.5C15 633 10 631 6.3 629C6.5 625 7.5 622 9 620.5C10.5 618.5 12.5 617.5 15 617.5Z" fill="#e03a30"/>
<path d="M9 624C12 626 15 627 19 628" stroke="#f08080" stroke-width="2.5" opacity="0.6"/>
<ellipse cx="23.5" cy="631.5" rx="5.2" ry="10.8" transform="rotate(-22 23.5 631.5)" fill="#5ec444"/>
<ellipse cx="25.5" cy="630" rx="3.4" ry="8" transform="rotate(-22 25.5 630)" fill="#1f2115"/>
<path d="M21 628C20 631 18.5 634 17 636L18.5 636.5C20 634 21.5 631 22 628Z" fill="#fff"/>
<path d="M26.5 635C30 634.5 32 637 31.5 640C31 642.5 28 643.5 25 642.5" fill="none" stroke="#e07070" stroke-width="1.2"/>
<path d="M40 628C40 624 44 621 49 621C54 621 58 624 58 628V638C58 642 54 644 49 644C44 644 40 642 40 638Z" fill="#173766"/>
<ellipse cx="49" cy="627.5" rx="9" ry="5.5" fill="#6fc6f3" stroke="#213" stroke-width="0.6"/>
<path d="M54 624L61 620L68 624V640L61 644L54 640Z" fill="#1e4b86"/>
<path d="M54 624L61 620L68 624L61 628Z" fill="#7ccbf3"/>
<path d="M62 621H69M65.5 617.5V624.5" stroke="#d82020" stroke-width="2"/>
<!-- row15 -->
<defs><clipPath id="raycl"><path d="M14 668L22 660L35 673L27 683Z"/></clipPath></defs>
<g clip-path="url(#raycl)" stroke="#e6c878" stroke-width="1.1"><path d="M10 668L28 686M12 666L30 684M14 664L32 682M16 662L34 680M18 660L36 678M20 658L38 676"/></g>
<circle cx="12.8" cy="662.5" r="7.8" fill="url(#gGold)"/>
<path d="M40 657H62L68 662V682H40Z" fill="#fff" stroke="#111" stroke-width="1.8"/>
<path d="M54 657V682M40 669H68" stroke="#111" stroke-width="1.3"/>
<circle cx="47.2" cy="663" r="3" fill="none" stroke="#333" stroke-width="0.8"/>
<rect x="58.5" y="660" width="3" height="5" rx="1.5" fill="#1a5aa8"/>
<rect x="45" y="672" width="4.5" height="4.5" fill="none" stroke="#555" stroke-width="0.7"/>
<rect x="57.5" y="672" width="4.5" height="4.5" fill="none" stroke="#555" stroke-width="0.7"/>
<!-- row16 -->
<rect x="6.8" y="695.2" width="12.3" height="10.4" rx="1" fill="#2b2b2b"/>
<rect x="8.5" y="697" width="4" height="2" fill="#556"/>
<path d="M4.5 697C3.5 694 5 692.5 6.5 692.5" fill="none" stroke="#777" stroke-width="0.6"/>
<path d="M10.5 706L5 715M10.5 706L15.5 715M10.5 706V717.5" stroke="#333" stroke-width="0.7"/>
<circle cx="5" cy="715" r="1" fill="#222"/><circle cx="15.5" cy="715" r="1" fill="#222"/><circle cx="10" cy="717.5" r="1.2" fill="#222"/>
<circle cx="27" cy="701" r="4.3" fill="none" stroke="#d84848" stroke-width="1"/>
<path d="M22.3 701H31.7M27 696.3V705.7" stroke="#e08080" stroke-width="0.5"/>
<g fill="#d83030"><circle cx="27" cy="696.7" r="0.9"/><circle cx="31.3" cy="701" r="0.9"/><circle cx="27" cy="705.3" r="0.9"/><circle cx="22.7" cy="701" r="0.9"/></g>
<circle cx="47.5" cy="698.5" r="3.6" fill="#4a4a4a"/><circle cx="54" cy="697" r="4" fill="#555"/>
<rect x="44.5" y="700.5" width="12.5" height="8.5" rx="1" fill="#3a3a3a"/>
<rect x="56.5" y="703.3" width="2.5" height="4" fill="#233a5a"/>
<path d="M59 704C64 704.5 67 706 66.5 708C65.5 710.5 56 711.5 44 710" fill="none" stroke="#d83a3a" stroke-width="1.3"/>
<path d="M42.5 709.8L46.5 707.5V712Z" fill="#d83a3a"/>
<path d="M49 710L45 716L43 718M53 710L55 716L58 719" fill="none" stroke="#1a1a1a" stroke-width="1.8" stroke-linecap="round"/>
<!-- row17 -->
<path d="M22 732C14 732 9 737 9 743" fill="none" stroke="#2a5aa8" stroke-width="3.5" stroke-linecap="round"/>
<path d="M4.5 741.5L13 740L9 748Z" fill="#2a5aa8"/>
<path d="M9 756L23 742" stroke="#56c840" stroke-width="3" stroke-linecap="round"/>
<path d="M24.5 739.5L17 740.5L23 746.5Z" fill="#56c840"/>
<path d="M16 756.5C23 756 28 751 28.5 745" fill="none" stroke="#c83030" stroke-width="3" stroke-linecap="round"/>
<path d="M29 738.5L33 745L25 745Z" fill="#e03030"/>
<circle cx="51.5" cy="739.5" r="8" fill="none" stroke="#444" stroke-width="2.2"/>
<path d="M47 739.5H56M51.5 735V744" stroke="#444" stroke-width="1.8"/>
<path d="M57 745.5L63 754" stroke="#333" stroke-width="3.5" stroke-linecap="round"/>
<!-- row18 view cubes -->
<g fill="none" stroke="#4a4a4a" stroke-width="1.5">
<path d="M12.5 769L22 774.5V785L12.5 790.5L3 785V774.5Z M3 774.5L22 785M22 774.5L3 785M12.5 769V790.5"/>
<path d="M36 769L45.5 774.5V785L36 790.5L26.5 785V774.5Z M26.5 774.5L36 780L45.5 774.5M36 780V790.5"/>
<path d="M59.5 769L69 774.5V785L59.5 790.5L50 785V774.5Z M50 774.5L59.5 780L69 774.5M59.5 780V790.5"/>
</g>
<rect x="1" y="793" width="23" height="3" fill="#8ab8e8"/>
</svg>

<svg class="a" style="left:0;top:0" width="280" height="180" viewBox="0 0 280 180">
<defs>
<linearGradient id="stl" x1="0" y1="0" x2="1" y2="1"><stop offset="0" stop-color="#8fa8ba"/><stop offset="1" stop-color="#6d8598"/></linearGradient>
<linearGradient id="stlTop" x1="0" y1="0" x2="1" y2="1"><stop offset="0" stop-color="#a9bfcd"/><stop offset="1" stop-color="#7f97a8"/></linearGradient>
<linearGradient id="refl" x1="0" y1="0" x2="0" y2="1"><stop offset="0" stop-color="#a8c2d2" stop-opacity="0.8"/><stop offset="1" stop-color="#e9e9e9" stop-opacity="0"/></linearGradient>
</defs>
<!-- header flange icon -->
<path d="M19.7 43.5L36.4 32.9L37.3 34.3V48.8L24.1 56.7L20.6 57.6Z" fill="#5e7287"/>
<path d="M19.7 43.5L36.4 32.9L38 34.2L21.5 44.8Z" fill="#a9c0cf"/>
<path d="M19.7 43.5V57.6C20 61 22.5 63 25.8 64.5L37.3 71.7L37.5 69.5L25 62C22.5 60.5 21.8 58.5 21.8 56V44.5Z" fill="#1f262d"/>
<path d="M21.8 56C21.8 58.5 22.5 60.5 25 62L37.5 69.5L53.6 60.2L37.3 50.3L37.3 48.8L24.1 56.7Z" fill="url(#stlTop)"/>
<path d="M22.5 57.5L37.3 48.8L39.5 50.2L25 59Z" fill="#c8d8e2"/>
<path d="M37.5 69.5L53.6 60.2V62.2L37.5 71.7L25.8 64.5L26 63Z" fill="#2a333c"/>
<path d="M22.3 84L38.2 73.5L52.3 83.5L38 92Z" fill="url(#refl)"/><path d="M22.3 84L38.2 73.5L52.3 83.5" fill="none" stroke="#7f8a93" stroke-width="0.9" opacity="0.8"/>
<!-- palette 2 icons -->
<!-- icon1 -->
<path d="M78 165.5L89.5 161L100 166L89.5 173Z" fill="none" stroke="#e06060" stroke-width="1"/>
<path d="M78 154.8L89.5 148.8L100 154.5L89.5 161Z" fill="url(#stl)"/>
<path d="M78 154.8L89.5 161L100 154.5V156L89.5 162.5L78 156.3Z" fill="#3c4c5a"/>
<path d="M101 164V157.5" stroke="#b02020" stroke-width="1.5"/><path d="M101 155L98.8 158.5H103.2Z" fill="#c82020"/>
<!-- icon2 -->
<path d="M119.5 157.5L110.8 157.1L119.8 152L123 153.8M118.8 162.9L110.8 157.1" fill="none" stroke="#333" stroke-width="0.9"/>
<path d="M113.5 158.7L117.8 155.6" stroke="#d02020" stroke-width="1.1"/><path d="M119 154.8L116 155.3L117.6 157.3Z" fill="#d02020"/>
<path d="M119.5 155.5L127.2 150.7V159L119.5 163.5Z" fill="#3f5367"/>
<path d="M119.5 155.5L127.2 150.7L128 151.5L120.5 156.2Z" fill="#c0d2dd"/>
<path d="M119.5 155.5V163.5" stroke="#1b2733" stroke-width="1.1"/>
<path d="M121 162.6L128.4 158.4L135.8 164.5L128.1 169.6Z" fill="#7e96a8"/>
<path d="M121 162.6L128.4 158.4L129.8 159.5L122.5 163.8Z" fill="#d5e3ea"/>
<path d="M119.5 163.5L128.1 170L135.8 165" fill="none" stroke="#2a3642" stroke-width="1.1"/>
<!-- icon3 -->
<path d="M143.8 153.6L151.5 158V167.5L159.2 172.3" fill="none" stroke="#e05050" stroke-width="1.2"/>
<path d="M143.8 153.6L153.1 148.8L161.1 152.7L151.5 157.8Z" fill="#7890a3"/>
<path d="M151.5 157.8L161.1 152.7V160.5L151.5 166.1Z" fill="#3c5064"/>
<path d="M151.5 157.5L161.1 152.4L162 153.4L152.4 158.6Z" fill="#d5e3ea"/>
<path d="M151.5 166.1L161.1 160.5L170.1 165.2L159.2 172.2Z" fill="#7e96a8"/>
<path d="M151.5 166L161.1 160.4L162.5 161.3L152.8 167Z" fill="#d5e3ea"/>
<path d="M159.2 172.6L170.1 165.6" stroke="#2a3642" stroke-width="1"/>
<!-- icon4 (selected) -->
<path d="M178.5 155L188 148.5L189.3 149.5V160L181 165.5L180 165Z" fill="#56697c"/>
<path d="M178.5 155L188 148.5L189.3 149.5L179.8 156Z" fill="#b9ccd8"/>
<path d="M178.5 155V164C178.5 166 179.5 167.5 181.5 168.5L190 173.5L190.5 172L182 167Z" fill="#1d252d"/>
<path d="M180 165L189.3 159.5L200.5 166.5L190.5 172.5L182 167.5Z" fill="url(#stlTop)"/>
<path d="M180.5 164.5L189.3 159.3L190.8 160.2L181.7 165.7Z" fill="#d8e6ee"/>
<path d="M190.5 172.5L200.5 166.5V167.8L190.5 174Z" fill="#27313a"/>
<!-- icon5 -->
<path d="M216 159.5L232.5 149.3V161.5L216 172Z" fill="#55697c"/>
<path d="M216 159.5L232.5 149.3L231 148.3L215 158.3Z" fill="#a9bfcd"/>
<path d="M216 159.5V172" stroke="#1d252d" stroke-width="1.4"/>
<path d="M214.5 160V166" stroke="#b8c4cc" stroke-width="1.2"/>
<!-- icon6 -->
<path d="M243.5 154L252.5 147.5L256 149L258.5 157.5L269 166.5L259.5 172.5L251 166.5Z" fill="#a9c0cd"/>
<path d="M252.5 147.5L256 149L258.5 157.5L269 166.5L267 167.5L257 159L254.5 150Z" fill="#d0dee6"/>
<path d="M243.5 154L251 166.5L259.5 172.5L260 173.8L250 167.5L242.8 154.8Z" fill="#2a3844"/>
<path d="M255 156C259 156 262.5 159 263.5 166" fill="none" stroke="#e07070" stroke-width="3.2" opacity="0.75"/>
<path d="M250.3 153L258.6 152.3L256.8 155L259 157.5L255.5 159.4L253 157Z" fill="#d42a2a"/>
</svg>


<div class="a" style="left:512px;top:21px;width:234px;height:73px;border:5px solid #f23d41;"></div>
</body></html>
